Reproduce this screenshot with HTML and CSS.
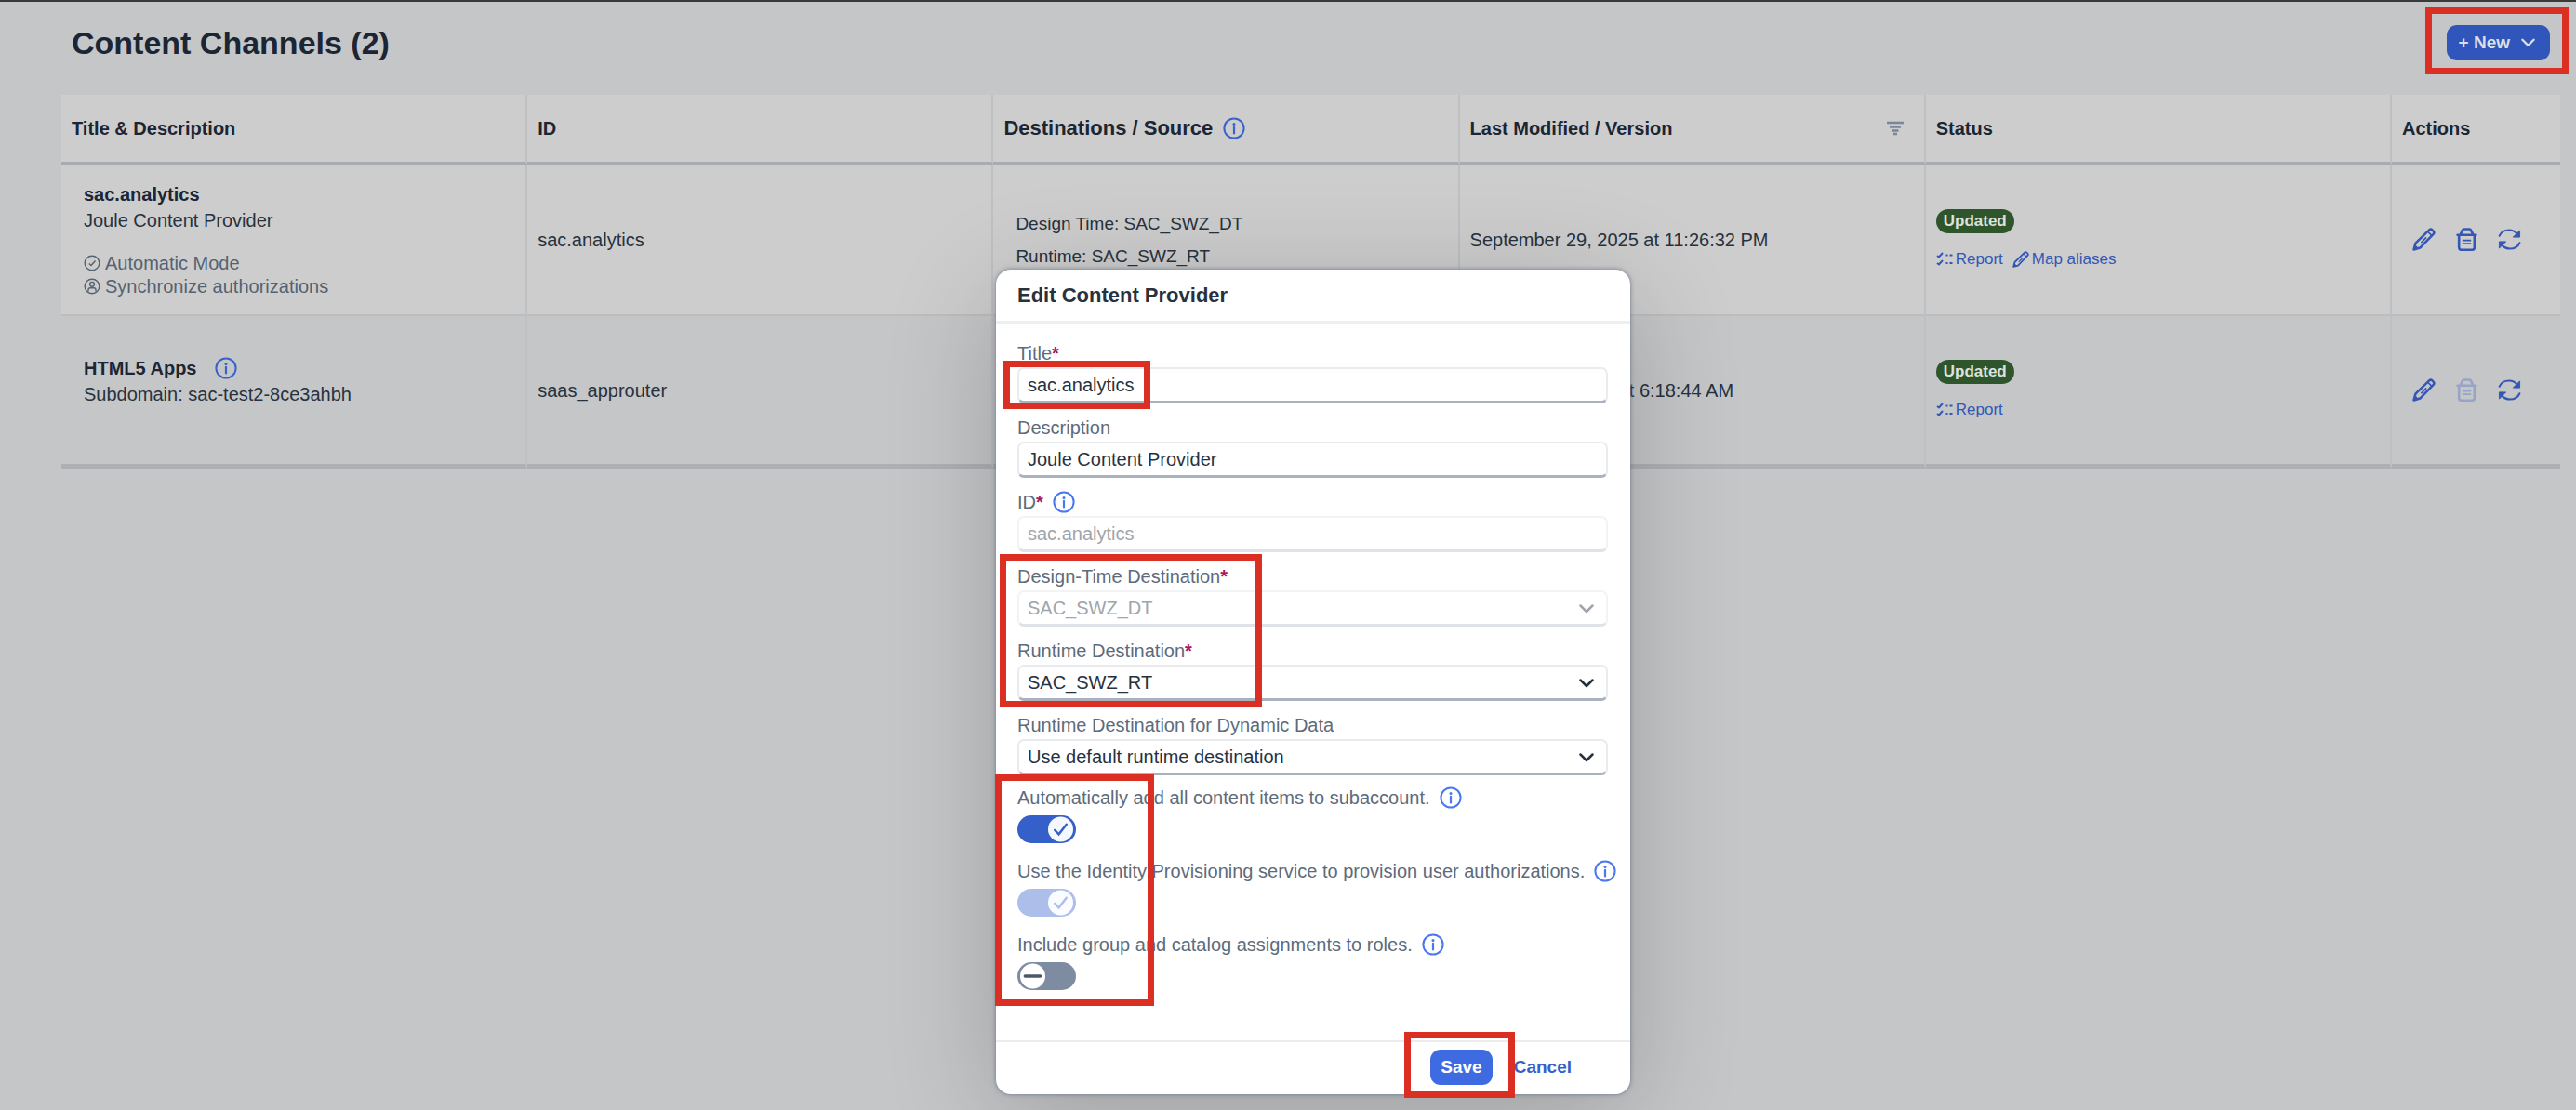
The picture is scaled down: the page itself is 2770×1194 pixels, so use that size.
FILE: index.html
```html
<!DOCTYPE html>
<html lang="en">
<head>
<meta charset="utf-8">
<meta name="viewport" content="width=device-width, initial-scale=1">
<title>Content Channels</title>
<link rel="stylesheet" href="styles.css">
</head>
<body>
<svg class="sprite" aria-hidden="true">
  <symbol id="i-info" viewBox="0 0 24 24"><circle cx="12" cy="12" r="10.6" fill="none" stroke="currentColor" stroke-width="2"/><circle cx="12" cy="7.6" r="1.5" fill="currentColor"/><path d="M12 10.8v6.6" stroke="currentColor" stroke-width="2.2" stroke-linecap="round"/></symbol>
  <symbol id="i-pencil" viewBox="0 0 24 24"><path d="M1.500 22.500l1.800-6.500L17.400 2.300a2.300 2.300 0 0 1 3.200 0l1.100 1.100a2.300 2.300 0 0 1 0 3.200L8 20.700z" fill="none" stroke="currentColor" stroke-width="2.400" stroke-linejoin="round"/><path d="M16 4l4 4M9 15.500l5.500-5.500" stroke="currentColor" stroke-width="1.500"/><path d="M1 23l1.500-6 4.500 4.500z" fill="currentColor"/></symbol>
  <symbol id="i-trash" viewBox="0 0 24 24"><path d="M4 7.500v13a2.300 2.300 0 0 0 2.300 2.300h11.400a2.300 2.300 0 0 0 2.300-2.300v-13M2.500 7.500h19M5.500 7l2.300-4.700a1.400 1.400 0 0 1 1.300-.900h5.800a1.400 1.400 0 0 1 1.300.900L18.500 7" fill="none" stroke="currentColor" stroke-width="2.500" stroke-linecap="round"/><path d="M7.500 13h9M7.500 16.500h9" stroke="currentColor" stroke-width="1.600"/></symbol>
  <symbol id="i-sync" viewBox="0 0 26 24"><path d="M1.800 8C3.500 4 7.800 1.600 12.500 1.600c4 0 7.200 1.700 9.200 4.400M24.200 16c-1.700 4-6 6.400-10.700 6.400-4 0-7.200-1.700-9.200-4.400" fill="none" stroke="currentColor" stroke-width="2.300" stroke-linecap="round"/><path d="M24.500 2v7.500H17zM1.500 22v-7.500H9z" fill="currentColor" stroke="currentColor" stroke-linejoin="round"/></symbol>
  <symbol id="i-list" viewBox="0 0 18 16"><path d="M1 4l2 1.500L7 1M1 12l2 1.500L7 9M10.500 3.500h2M14.500 3.500h3M10.500 12h2M14.500 12h3" fill="none" stroke="currentColor" stroke-width="2"/></symbol>
  <symbol id="i-filter" viewBox="0 0 18 16"><path d="M0 2h18M3 6.500h12M5.500 10.500h7M7 14h4" stroke="currentColor" stroke-width="2.500"/></symbol>
  <symbol id="i-auto" viewBox="0 0 18 18"><circle cx="9" cy="9" r="7.800" fill="none" stroke="currentColor" stroke-width="1.400"/><path d="M5.800 9.500l2.200 2L12.500 6.500" fill="none" stroke="currentColor" stroke-width="1.500"/></symbol>
  <symbol id="i-user" viewBox="0 0 18 18"><circle cx="9" cy="9" r="7.800" fill="none" stroke="currentColor" stroke-width="1.400"/><circle cx="9" cy="6.800" r="2.400" fill="none" stroke="currentColor" stroke-width="1.400"/><path d="M5 14.500v-1.800a2 2 0 0 1 2-2h4a2 2 0 0 1 2 2v1.800" fill="none" stroke="currentColor" stroke-width="1.400"/></symbol>
  <symbol id="i-down" viewBox="0 0 16 10"><path d="M1.500 1.500L8 8l6.500-6.500" fill="none" stroke="currentColor" stroke-width="2.500" stroke-linecap="round" stroke-linejoin="round"/></symbol>
</svg>

<main class="page">
  <header class="toolbar">
    <h1 class="toolbar-title">Content Channels (2)</h1>
    <div class="marked">
      <button class="button button-new" type="button">+ New <svg class="chevron-new"><use href="#i-down"/></svg></button>
      <span class="mark mark-new"></span>
    </div>
  </header>

  <table class="channels">
    <thead>
      <tr>
        <th scope="col">Title &amp; Description</th>
        <th scope="col">ID</th>
        <th scope="col"><span class="head-large">Destinations / Source <svg class="icon-info"><use href="#i-info"/></svg></span></th>
        <th scope="col"><span class="head-filter">Last Modified / Version <svg class="icon-filter"><use href="#i-filter"/></svg></span></th>
        <th scope="col">Status</th>
        <th scope="col" class="col-actions">Actions</th>
      </tr>
    </thead>
    <tbody>
      <tr class="row-light">
        <td class="cell-inset">
          <div class="name">sac.analytics</div>
          <div class="summary">Joule Content Provider</div>
          <div class="notes">
            <div class="note"><svg class="icon-note"><use href="#i-auto"/></svg>Automatic Mode</div>
            <div class="note"><svg class="icon-note"><use href="#i-user"/></svg>Synchronize authorizations</div>
          </div>
        </td>
        <td>sac.analytics</td>
        <td class="cell-inset cell-lines"><div>Design Time: SAC_SWZ_DT</div><div>Runtime: SAC_SWZ_RT</div></td>
        <td>September 29, 2025 at 11:26:32 PM</td>
        <td>
          <div class="status">
            <span class="badge">Updated</span>
            <div class="links"><a class="link" href="#"><svg class="icon-list"><use href="#i-list"/></svg>Report</a><a class="link" href="#"><svg class="icon-map"><use href="#i-pencil"/></svg>Map aliases</a></div>
          </div>
        </td>
        <td>
          <div class="actions">
            <button class="icon-button" type="button" aria-label="Edit"><svg class="icon-action"><use href="#i-pencil"/></svg></button>
            <button class="icon-button" type="button" aria-label="Delete"><svg class="icon-action"><use href="#i-trash"/></svg></button>
            <button class="icon-button" type="button" aria-label="Synchronize"><svg class="icon-action"><use href="#i-sync"/></svg></button>
          </div>
        </td>
      </tr>
      <tr class="row-last">
        <td class="cell-inset">
          <div class="name name-info">HTML5 Apps <svg class="icon-info"><use href="#i-info"/></svg></div>
          <div class="summary">Subdomain: sac-test2-8ce3ahbh</div>
          <div class="notes"></div>
        </td>
        <td>saas_approuter</td>
        <td></td>
        <td>October 29, 2025 at 6:18:44 AM</td>
        <td>
          <div class="status">
            <span class="badge">Updated</span>
            <div class="links"><a class="link" href="#"><svg class="icon-list"><use href="#i-list"/></svg>Report</a></div>
          </div>
        </td>
        <td>
          <div class="actions">
            <button class="icon-button" type="button" aria-label="Edit"><svg class="icon-action"><use href="#i-pencil"/></svg></button>
            <button class="icon-button" type="button" aria-label="Delete" disabled><svg class="icon-action"><use href="#i-trash"/></svg></button>
            <button class="icon-button" type="button" aria-label="Synchronize"><svg class="icon-action"><use href="#i-sync"/></svg></button>
          </div>
        </td>
      </tr>
    </tbody>
  </table>
</main>

<div class="overlay">
  <form class="dialog" role="dialog" aria-labelledby="dialog-title">
    <h2 class="dialog-title" id="dialog-title">Edit Content Provider</h2>
    <div class="fields">
      <div class="field">
        <label class="label" for="f-title">Title<span class="required">*</span></label>
        <input class="input" id="f-title" type="text" value="sac.analytics">
        <span class="mark mark-title"></span>
      </div>
      <div class="field">
        <label class="label" for="f-desc">Description</label>
        <input class="input" id="f-desc" type="text" value="Joule Content Provider">
      </div>
      <div class="field">
        <label class="label" for="f-id">ID<span class="required">*</span><svg class="icon-info"><use href="#i-info"/></svg></label>
        <input class="input" id="f-id" type="text" value="sac.analytics" disabled>
      </div>
      <div class="field">
        <label class="label" for="f-design">Design-Time Destination<span class="required">*</span></label>
        <div class="select"><select class="input" id="f-design" disabled><option>SAC_SWZ_DT</option></select><svg class="chevron"><use href="#i-down"/></svg></div>
        <span class="mark mark-destinations"></span>
      </div>
      <div class="field">
        <label class="label" for="f-runtime">Runtime Destination<span class="required">*</span></label>
        <div class="select"><select class="input" id="f-runtime"><option>SAC_SWZ_RT</option></select><svg class="chevron"><use href="#i-down"/></svg></div>
      </div>
      <div class="field">
        <label class="label" for="f-dynamic">Runtime Destination for Dynamic Data</label>
        <div class="select"><select class="input" id="f-dynamic"><option>Use default runtime destination</option></select><svg class="chevron"><use href="#i-down"/></svg></div>
      </div>
      <div class="field field-switch">
        <label class="label label-switch" for="f-auto">Automatically add all content items to subaccount.<svg class="icon-info"><use href="#i-info"/></svg></label>
        <div class="switch"><input class="track" id="f-auto" type="checkbox" role="switch" checked><svg class="thumb" viewBox="0 0 29 29"><circle cx="14.500" cy="14.500" r="14" fill="#f5f8ff"/><path d="M8 15.500l4.500 4.500L21 9" fill="none" stroke="currentColor" stroke-width="2.500" stroke-linecap="round"/></svg></div>
        <span class="mark mark-switches"></span>
      </div>
      <div class="field field-switch">
        <label class="label label-switch" for="f-identity">Use the Identity Provisioning service to provision user authorizations.<svg class="icon-info"><use href="#i-info"/></svg></label>
        <div class="switch"><input class="track" id="f-identity" type="checkbox" role="switch" checked disabled><svg class="thumb" viewBox="0 0 29 29"><circle cx="14.500" cy="14.500" r="14" fill="#fbfcff"/><path d="M8 15.500l4.500 4.500L21 9" fill="none" stroke="currentColor" stroke-width="2.500" stroke-linecap="round"/></svg></div>
      </div>
      <div class="field field-switch">
        <label class="label label-switch" for="f-group">Include group and catalog assignments to roles.<svg class="icon-info"><use href="#i-info"/></svg></label>
        <div class="switch"><input class="track" id="f-group" type="checkbox" role="switch"><svg class="thumb" viewBox="0 0 29 29"><circle cx="14.500" cy="14.500" r="14" fill="#fff"/><path d="M6 14.500h17" fill="none" stroke="currentColor" stroke-width="3.500" stroke-linecap="round"/></svg></div>
      </div>
    </div>
    <footer class="dialog-footer">
      <div class="marked">
        <button class="button button-save" type="button">Save</button>
        <span class="mark mark-save"></span>
      </div>
      <button class="button button-cancel" type="button">Cancel</button>
    </footer>
  </form>
</div>
</body>
</html>
```

FILE: styles.css
```css
* {
  box-sizing: border-box;
}

body {
  margin: 0;
  min-height: 100vh;
  position: relative;
  border-top: 2px solid #3a3a3a;
  background: #c5c6c8;
  color: #28323e;
  font-family: "Liberation Sans", Arial, sans-serif;
  font-size: 20px;
  line-height: 24px;
}

button,
input,
select {
  font: inherit;
}

svg {
  display: block;
  flex: none;
}

.sprite {
  position: absolute;
  width: 0;
  height: 0;
}

/* Toolbar */

.toolbar {
  display: flex;
  justify-content: space-between;
  align-items: center;
  padding: 25px 28px 37px 77px;
}

.toolbar-title {
  margin: 0;
  font-size: 34px;
  line-height: 38px;
  color: #1b2533;
}

.button {
  display: flex;
  align-items: center;
  height: 38px;
  border: 0;
  border-radius: 11px;
  font-size: 19px;
  font-weight: bold;
}

.button-new {
  gap: 12px;
  padding: 0 16px 0 13px;
  background: #3055bb;
  color: #dcdfe8;
}

.chevron-new {
  width: 15px;
  height: 10px;
}

/* Channel table */

.channels {
  width: calc(100% - 83px);
  margin: 0 17px 0 66px;
  border-spacing: 0;
  table-layout: fixed;
}

.channels th,
.channels td {
  padding: 0 11px;
  text-align: left;
  border-right: 2px solid #bfc0c2;
}

.channels th:last-child,
.channels td:last-child {
  border-right: 0;
}

.channels th {
  height: 75px;
  background: #cdcdcd;
  border-bottom: 3px solid #a9abb3;
  color: #1b2533;
}

.channels .col-actions {
  width: 181px;
}

.channels .cell-inset {
  padding-left: 24px;
}

.channels td {
  height: 163px;
  border-bottom: 2px solid #bcbdbf;
}

.row-light {
  background: #cdcdcd;
}

.channels .row-last td {
  height: 164px;
  border-bottom: 5px solid #aeb0b4;
}

.head-large {
  display: flex;
  align-items: center;
  gap: 11px;
  font-size: 22px;
}

.head-filter {
  display: flex;
  align-items: center;
  justify-content: space-between;
  padding-right: 11px;
}

.icon-filter {
  width: 18px;
  height: 16px;
  color: #7a8797;
}

.icon-info {
  width: 24px;
  height: 24px;
  color: #3a62cc;
}

.name {
  font-weight: bold;
  line-height: 28px;
  color: #1b2533;
}

.name-info {
  display: flex;
  align-items: center;
  gap: 20px;
}

.summary {
  line-height: 28px;
}

.notes {
  padding-top: 20px;
}

.note {
  display: flex;
  align-items: center;
  gap: 5px;
  line-height: 25px;
  color: #556270;
}

.icon-note {
  width: 18px;
  height: 18px;
}

.cell-lines {
  font-size: 19px;
  line-height: 35px;
}

.status {
  display: flex;
  flex-direction: column;
  align-items: flex-start;
  gap: 16px;
}

.badge {
  padding: 0 8px;
  border-radius: 13px;
  background: #2f552d;
  color: #dde2dc;
  font-size: 17px;
  font-weight: bold;
  line-height: 26px;
}

.links {
  display: flex;
  gap: 10px;
}

.link {
  display: flex;
  align-items: center;
  gap: 3px;
  color: #3457b5;
  font-size: 17px;
  text-decoration: none;
}

.icon-list {
  width: 18px;
  height: 16px;
}

.icon-map {
  width: 18px;
  height: 18px;
}

.actions {
  display: flex;
  gap: 21px;
  padding-left: 11px;
}

.icon-button {
  padding: 0;
  border: 0;
  background: none;
  color: #3457b5;
}

.icon-button:disabled {
  color: #97a4c6;
}

.icon-action {
  width: 25px;
  height: 25px;
}

/* Dialog */

.overlay {
  position: absolute;
  inset: 0;
  display: flex;
  justify-content: center;
  align-items: flex-start;
  padding: 288px 0 0 54px;
}

.dialog {
  width: 682px;
  border-radius: 16px;
  background: #fff;
  box-shadow: 0 0 5px #6c7688, 0 24px 120px rgba(0, 0, 0, 0.2);
}

.dialog-title {
  margin: 0;
  padding: 15px 23px 14px;
  border-bottom: 4px solid #eef0f0;
  color: #28323e;
  font-size: 22px;
  line-height: 26px;
}

.fields {
  padding: 16px 24px 37px 23px;
}

.field {
  position: relative;
  height: 80px;
}

.field-switch {
  height: 79px;
}

.label {
  display: flex;
  align-items: center;
  height: 30px;
  color: #5d6b7b;
  white-space: nowrap;
}

.label .icon-info {
  margin-left: 10px;
  color: #4a78ee;
}

.label-switch {
  height: 26px;
}

.required {
  color: #a8175f;
  font-weight: bold;
}

.input {
  display: block;
  width: 100%;
  height: 39px;
  padding: 0 9px;
  border: 2px solid #e9ebee;
  border-bottom: 3px solid #a9b3c0;
  border-radius: 7px;
  background: #fff;
  color: #28323e;
  appearance: none;
}

.input:disabled {
  border-color: #f2f3f5;
  border-bottom-color: #dfe3e9;
  color: #a0a5ab;
  opacity: 1;
}

.select {
  display: grid;
  align-items: center;
}

.select > * {
  grid-area: 1 / 1;
}

.chevron {
  justify-self: end;
  width: 16px;
  height: 10px;
  margin-right: 15px;
}

.input:disabled + .chevron {
  color: #a0a5ab;
}

.switch {
  display: grid;
  width: 63px;
  margin-top: 6px;
}

.switch > * {
  grid-area: 1 / 1;
}

.track {
  width: 63px;
  height: 30px;
  margin: 0;
  border-radius: 15px;
  background: #7d8ca0;
  appearance: none;
}

.thumb {
  align-self: center;
  width: 29px;
  height: 28px;
  margin: 0 2px;
  color: #4d5866;
  pointer-events: none;
}

.track:checked {
  background: #3560c9;
}

.track:checked + .thumb {
  justify-self: end;
  color: #3560c9;
}

.track:disabled {
  background: #aebeea;
}

.track:disabled + .thumb {
  color: #aebeea;
}

.dialog-footer {
  display: flex;
  justify-content: flex-end;
  gap: 12px;
  padding: 8px 52px 10px;
  border-top: 2px solid #ececec;
}

.button-save {
  padding: 0 11px;
  background: #3f6be2;
  color: #fff;
}

.button-cancel {
  padding: 0 11px;
  background: none;
  color: #3560c9;
}

/* Red highlight frames drawn over the controls */

.marked {
  position: relative;
}

.mark {
  position: absolute;
  z-index: 1;
  border: 7px solid #da2f22;
  pointer-events: none;
}

.mark-new {
  inset: -19px -20px -15px -23px;
}

.mark-title {
  top: 23px;
  left: -15px;
  width: 158px;
  height: 52px;
}

.mark-destinations {
  top: -9px;
  left: -19px;
  width: 282px;
  height: 165px;
}

.mark-switches {
  top: -12px;
  left: -24px;
  width: 171px;
  height: 249px;
}

.mark-save {
  inset: -19px -24px -14px -28px;
}
```
